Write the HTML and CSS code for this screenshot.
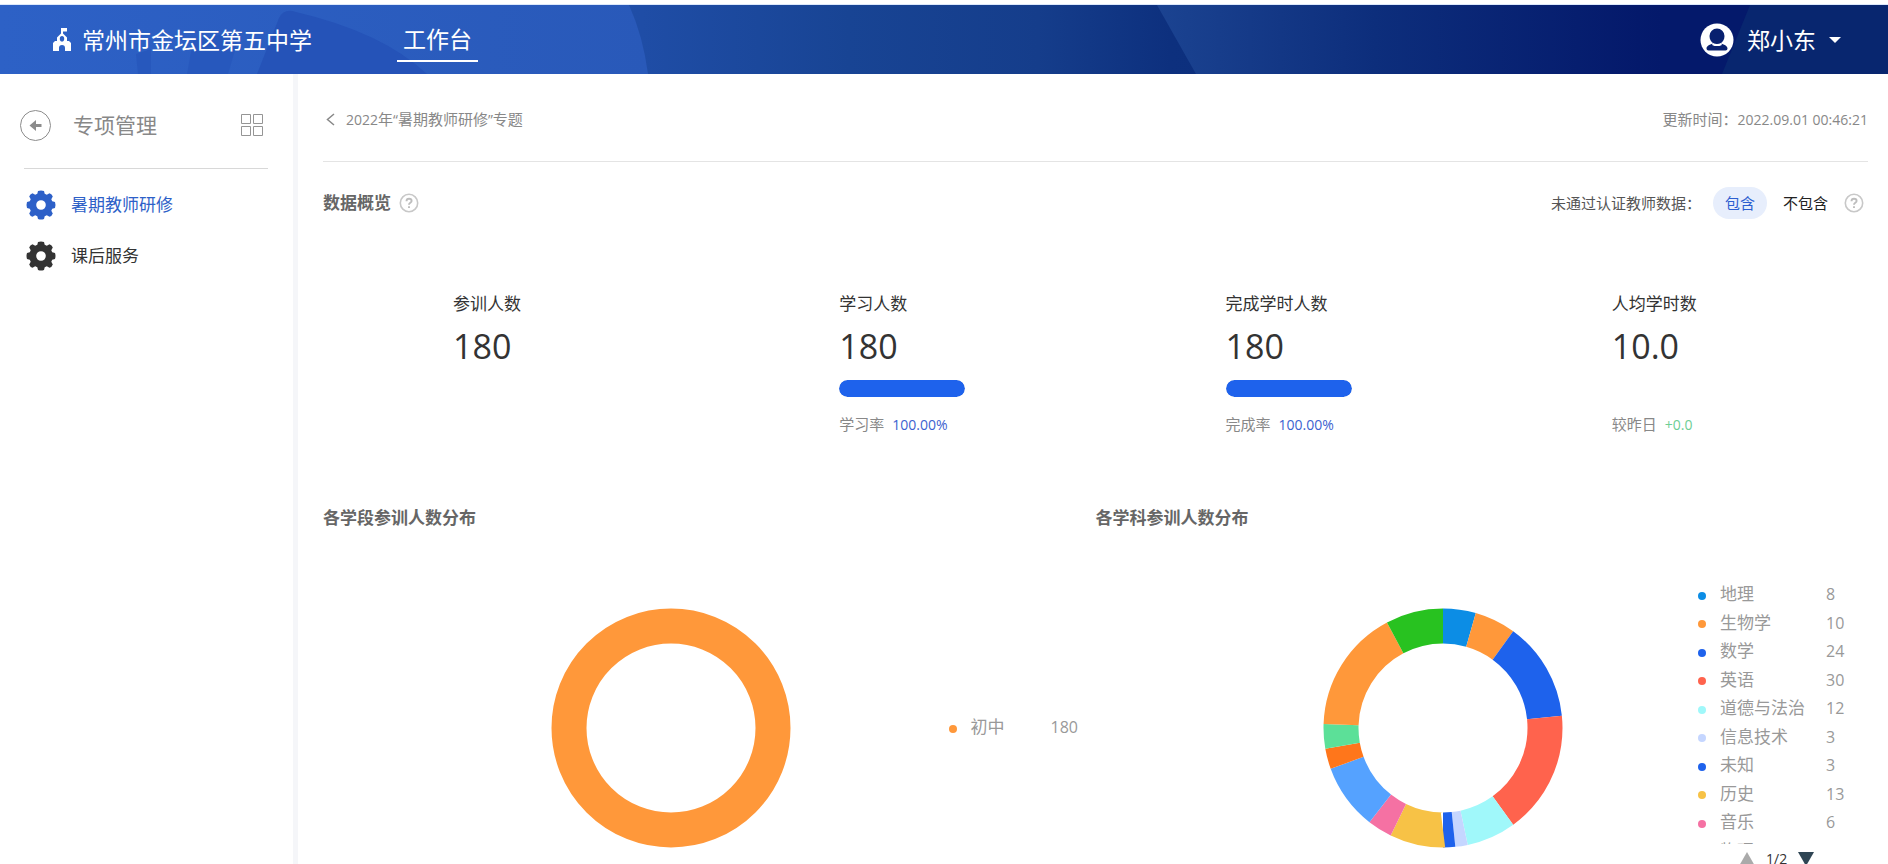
FILE: index.html
```html
<!DOCTYPE html>
<html lang="zh-CN">
<head>
<meta charset="utf-8">
<title>工作台</title>
<link rel="stylesheet" href="styles.css">
</head>
<body>
<svg class="defs" aria-hidden="true">
  <symbol id="gear" viewBox="0 0 30 30">
    <path fill-rule="evenodd" d="M12 1Q15 0 18 1L18.700 3.800L20.800 4.700L23.500 3.200Q26 4 26.800 6.500L25.300 9.200L26.200 11.300L29 12Q30 15 29 18L26.200 18.700L25.300 20.800L26.800 23.500Q26 26 23.500 26.800L20.800 25.300L18.700 26.200L18 29Q15 30 12 29L11.300 26.200L9.200 25.300L6.500 26.800Q4 26 3.200 23.500L4.700 20.800L3.800 18.700L1 18Q0 15 1 12L3.800 11.300L4.700 9.200L3.200 6.500Q4 4 6.500 3.200L9.200 4.700L11.300 3.800ZM15 10.200A4.800 4.800 0 1 0 15 19.800A4.800 4.800 0 1 0 15 10.200Z"/>
  </symbol>
  <symbol id="help" viewBox="0 0 20 20">
    <circle cx="10" cy="10" r="8.700" fill="none" stroke="#c8c8c8" stroke-width="1.600"/>
    <path d="M7.500 8.200C7.500 4.900 12.600 5.100 12.600 8C12.600 9.900 10 9.800 10 11.800M10 13.200V14.900" fill="none" stroke="#bdbdbd" stroke-width="1.900"/>
  </symbol>
</svg>

<header class="topbar">
  <svg class="topbar-art" viewBox="0 0 1888 69" preserveAspectRatio="none" aria-hidden="true">
    <defs>
      <linearGradient id="sky" x1="0" x2="1"><stop offset="0" stop-color="#2a5cc0"/><stop offset=".34" stop-color="#1f4da6"/><stop offset=".45" stop-color="#184494"/><stop offset=".55" stop-color="#153d8b"/><stop offset=".62" stop-color="#0d307e"/><stop offset=".75" stop-color="#0a2a78"/><stop offset=".88" stop-color="#04196b"/><stop offset="1" stop-color="#04196b"/></linearGradient>
      <linearGradient id="disc" x1="0" x2="1"><stop offset="0" stop-color="#2d61c6"/><stop offset="1" stop-color="#2959b9"/></linearGradient>
      <linearGradient id="slope" x1="0" x2="1"><stop offset="0" stop-color="#1b4391"/><stop offset=".45" stop-color="#0d2e7c"/><stop offset="1" stop-color="#04196b"/></linearGradient>
    </defs>
    <rect width="1888" height="69" fill="url(#sky)"/>
    <path d="M0 0H629Q643 31 648 69H0Z" fill="url(#disc)"/>
    <path d="M257 69L279 13Q284 3 296 7Q382 27 427 69Z" fill="#2553b8"/>
    <path d="M138 69L136 49L151 44V69ZM187 69L193 36L241 25L228 69Z" fill="#2758bd"/>
    <path d="M1157 0L1196 69H1640V0Z" fill="url(#slope)"/>
    <path d="M1750 0H1888V69H1722Z" fill="#08266f"/>
  </svg>
  <div class="school">
    <svg width="18" height="24" viewBox="0 0 18 24" aria-hidden="true"><path fill="#fff" fill-rule="evenodd" d="M8 0H14V3.500H10V5.500L14 9.500V13H16L18 15V23H12V20A3 3 0 0 0 6 20V23H0V15L2 13H4V9.500L8 5.500ZM9 8A2.200 2.800 0 1 0 9 13.600A2.200 2.800 0 1 0 9 8Z"/></svg>
    <span>常州市金坛区第五中学</span>
  </div>
  <nav class="topnav"><a href="#">工作台</a></nav>
  <button class="user" type="button">
    <svg width="34" height="34" viewBox="0 0 34 34" aria-hidden="true"><circle cx="17" cy="17" r="16.500" fill="#fff"/><path fill="#08206f" d="M17 5.500A7.500 7.500 0 0 1 24.500 13C24.500 16.500 22.800 19 20.300 20.400C24 21.300 27.500 22.500 27.500 25.500Q27.500 27.500 25.500 27.500H8.500Q6.500 27.500 6.500 25.500C6.500 22.500 10 21.300 13.700 20.400C11.200 19 9.500 16.500 9.500 13A7.500 7.500 0 0 1 17 5.500Z"/><path d="M12.500 21Q17 23.200 21.500 21" fill="none" stroke="#fff" stroke-width="2"/></svg>
    <span>郑小东</span>
    <svg width="12" height="6" viewBox="0 0 12 6" aria-hidden="true"><path fill="#fff" d="M0 0H12L6 6Z"/></svg>
  </button>
</header>

<div class="shell">
  <aside class="sidebar">
    <div class="side-head">
      <button class="icon-btn" type="button" aria-label="返回"><svg width="31" height="31" viewBox="0 0 31 31"><circle cx="15.500" cy="15.500" r="15" fill="none" stroke="#8c8c8c"/><path d="M9.500 15.500L16 10V14H21.500V17H16V21Z" fill="#8c8c8c"/></svg></button>
      <h2>专项管理</h2>
      <button class="icon-btn" type="button" aria-label="应用列表"><svg width="22" height="22" viewBox="0 0 22 22"><path d="M.5.5H9.500V9.500H.5ZM12.500.5H21.500V9.500H12.500ZM.5 12.500H9.500V21.500H.5ZM12.500 12.500H21.500V21.500H12.500Z" fill="none" stroke="#959595"/></svg></button>
    </div>
    <nav class="side-nav">
      <a class="active" href="#"><svg width="30" height="30"><use href="#gear"/></svg>暑期教师研修</a>
      <a href="#"><svg width="30" height="30"><use href="#gear"/></svg>课后服务</a>
    </nav>
  </aside>

  <main class="main">
    <div class="crumbs">
      <a href="#"><svg width="9" height="13" viewBox="0 0 9 13" aria-hidden="true"><path d="M8 1L1.500 6.500L8 12" fill="none" stroke="#888" stroke-width="1.500"/></svg><span><span class="latin">2022</span>年<span class="latin">“</span>暑期教师研修<span class="latin">”</span>专题</span></a>
      <p>更新时间：<span class="latin">2022.09.01 00:46:21</span></p>
    </div>

    <div class="overview-head">
      <h1>数据概览</h1>
      <svg width="20" height="20" role="img" aria-label="说明"><use href="#help"/></svg>
      <div class="filter">
        <span>未通过认证教师数据：</span>
        <button class="pill selected" type="button">包含</button>
        <button class="pill" type="button">不包含</button>
        <svg width="20" height="20" role="img" aria-label="说明"><use href="#help"/></svg>
      </div>
    </div>

    <section class="stats">
      <div class="stat"><h3>参训人数</h3><strong>180</strong></div>
      <div class="stat"><h3>学习人数</h3><strong>180</strong><div class="bar"><div style="width:100%"></div></div><p>学习率<b>100.00%</b></p></div>
      <div class="stat"><h3>完成学时人数</h3><strong>180</strong><div class="bar"><div style="width:100%"></div></div><p>完成率<b>100.00%</b></p></div>
      <div class="stat"><h3>人均学时数</h3><strong>10.0</strong><div class="bar empty"></div><p>较昨日<b class="up">+0.0</b></p></div>
    </section>

    <div class="charts">
      <section class="chart">
        <h2>各学段参训人数分布</h2>
        <div class="chart-body stage">
          <svg class="donut" width="240" height="240" viewBox="0 0 240 240"><circle cx="120" cy="120" r="102" stroke="#ff983a"/></svg>
          <div class="legend-box"><ul class="legend"><li><i class="c2"></i><span>初中</span><b>180</b></li></ul></div>
        </div>
      </section>
      <section class="chart">
        <h2>各学科参训人数分布</h2>
        <div class="chart-body subject">
          <svg class="donut" width="240" height="240" viewBox="0 0 240 240">
            <g transform="rotate(-90 120 120)">
              <circle cx="120" cy="120" r="102" pathLength="180" stroke="#0c8de5" stroke-dasharray="8 172"/>
              <circle cx="120" cy="120" r="102" pathLength="180" stroke="#ff983a" stroke-dasharray="10 170" stroke-dashoffset="-8"/>
              <circle cx="120" cy="120" r="102" pathLength="180" stroke="#1e62ec" stroke-dasharray="24 156" stroke-dashoffset="-18"/>
              <circle cx="120" cy="120" r="102" pathLength="180" stroke="#ff634d" stroke-dasharray="30 150" stroke-dashoffset="-42"/>
              <circle cx="120" cy="120" r="102" pathLength="180" stroke="#a0f8fa" stroke-dasharray="12 168" stroke-dashoffset="-72"/>
              <circle cx="120" cy="120" r="102" pathLength="180" stroke="#c5d6ff" stroke-dasharray="3 177" stroke-dashoffset="-84"/>
              <circle cx="120" cy="120" r="102" pathLength="180" stroke="#1e62ec" stroke-dasharray="3 177" stroke-dashoffset="-87"/>
              <circle cx="120" cy="120" r="102" pathLength="180" stroke="#f7c246" stroke-dasharray="13 167" stroke-dashoffset="-90"/>
              <circle cx="120" cy="120" r="102" pathLength="180" stroke="#f571a3" stroke-dasharray="6 174" stroke-dashoffset="-103"/>
              <circle cx="120" cy="120" r="102" pathLength="180" stroke="#55a2ff" stroke-dasharray="16 164" stroke-dashoffset="-109"/>
              <circle cx="120" cy="120" r="102" pathLength="180" stroke="#ff761b" stroke-dasharray="5 175" stroke-dashoffset="-125"/>
              <circle cx="120" cy="120" r="102" pathLength="180" stroke="#5ce098" stroke-dasharray="6 174" stroke-dashoffset="-130"/>
              <circle cx="120" cy="120" r="102" pathLength="180" stroke="#ff983a" stroke-dasharray="30 150" stroke-dashoffset="-136"/>
              <circle cx="120" cy="120" r="102" pathLength="180" stroke="#28c220" stroke-dasharray="14 166" stroke-dashoffset="-166"/>
            </g>
          </svg>
          <div class="legend-box">
            <div class="legend-view">
              <ul class="legend">
                <li><i class="c1"></i><span>地理</span><b>8</b></li>
                <li><i class="c2"></i><span>生物学</span><b>10</b></li>
                <li><i class="c3"></i><span>数学</span><b>24</b></li>
                <li><i class="c4"></i><span>英语</span><b>30</b></li>
                <li><i class="c5"></i><span>道德与法治</span><b>12</b></li>
                <li><i class="c6"></i><span>信息技术</span><b>3</b></li>
                <li><i class="c3"></i><span>未知</span><b>3</b></li>
                <li><i class="c7"></i><span>历史</span><b>13</b></li>
                <li><i class="c8"></i><span>音乐</span><b>6</b></li>
                <li><span class="next">物理</span></li>
              </ul>
            </div>
            <div class="pager">
              <button class="icon-btn" type="button" aria-label="上一页"><svg width="16" height="14" viewBox="0 0 16 14"><path d="M8 0L16 14H0Z" fill="#aaa"/></svg></button>
              <span>1/2</span>
              <button class="icon-btn" type="button" aria-label="下一页"><svg width="16" height="14" viewBox="0 0 16 14"><path d="M0 0H16L8 14Z" fill="#2f4554"/></svg></button>
            </div>
          </div>
        </div>
      </section>
    </div>
  </main>
</div>
</body>
</html>
```
FILE: styles.css
```css
* { box-sizing: border-box; margin: 0; padding: 0; }

body {
  height: 100vh;
  display: flex;
  flex-direction: column;
  overflow: hidden;
  padding-top: 4px;
  background: #fff;
  color: #333;
  font: 15px/24px "Open Sans", "Noto Sans CJK SC", sans-serif;
}

a { color: inherit; text-decoration: none; }
button { border: 0; background: none; color: inherit; font: inherit; cursor: pointer; }
svg { display: block; flex: none; }
ul { list-style: none; }
h1, h2, h3, b, strong { font-weight: 400; }
.defs { width: 0; height: 0; position: absolute; }
.latin { font-size: 14px; }
.icon-btn { display: block; flex: none; }

/* Top bar */
.topbar {
  position: relative;
  isolation: isolate;
  flex: none;
  display: flex;
  align-items: center;
  height: 70px;
  padding: 0 47px 0 53px;
  border-top: 1px solid #dce8fb;
  color: #fff;
  font-size: 23px;
  line-height: 34px;
}
.topbar-art { position: absolute; inset: 0; z-index: -1; width: 100%; height: 100%; }
.school { display: flex; align-items: center; gap: 11px; }
.topnav { margin-left: 85px; padding-top: 4px; }
.topnav a { display: block; padding: 0 6px 4px; border-bottom: 2px solid #fff; }
.user { display: flex; align-items: center; gap: 13px; margin-left: auto; }

/* Sidebar */
.shell { flex: 1; display: flex; min-height: 0; }
.sidebar { flex: none; width: 298px; border-right: 5px solid #f5f6f9; }
.side-head {
  display: flex;
  align-items: center;
  height: 95px;
  margin: 0 25px 0 24px;
  padding: 8px 5px 0 0;
  border-bottom: 1px solid #d8d8d8;
}
.side-head .icon-btn:first-child { margin-left: -4px; }
.side-head h2 { flex: 1; margin-left: 22px; color: #888; font-size: 21px; }
.side-nav { padding: 10px 0 0 26px; }
.side-nav a { display: flex; align-items: center; gap: 15px; height: 51px; font-size: 17px; fill: #333; }
.side-nav .active { color: #2d60c8; fill: #2d60c8; }

/* Page head */
.main { flex: 1; min-width: 0; padding: 0 20px 0 25px; }
.crumbs {
  display: flex;
  align-items: center;
  justify-content: space-between;
  height: 88px;
  padding-top: 4px;
  border-bottom: 1px solid #e4e4e4;
  color: #888;
}
.crumbs a { display: flex; align-items: center; gap: 11px; padding-left: 3px; }
.overview-head { display: flex; align-items: center; gap: 8px; height: 82px; padding-right: 4px; }
h1, .chart h2 { color: #666; font-size: 17px; font-weight: 700; }
.filter { display: flex; align-items: center; margin-left: auto; color: #555; }
.pill { height: 32px; padding: 0 12px; border-radius: 16px; color: #222; }
.pill.selected { margin: 0 4px 0 12px; background: #e7eefc; color: #2d5fd0; }
.filter svg { margin-left: 4px; }

/* Figures */
.stats { display: grid; grid-template-columns: repeat(4, 1fr); padding-top: 48px; }
.stat { padding-left: 130px; }
.stat h3 { font-size: 17px; }
.stat strong { display: block; margin: 8px 0 12px; font-size: 34px; line-height: 44px; }
.bar { width: 126px; height: 17px; overflow: hidden; border-radius: 9px; background: #e8e8e8; }
.bar div { height: 100%; border-radius: 9px; background: #1e62ec; }
.bar.empty { background: none; }
.stat p { margin-top: 15px; color: #888; }
.stat b { margin-left: 8px; color: #3c62d0; font-size: 14px; }
.stat .up { color: #6dce94; }

/* Charts */
.charts { display: grid; grid-template-columns: 1fr 1fr; padding-top: 69px; }
.chart-body { display: flex; align-items: flex-start; padding-top: 50px; }
.donut { margin: 28px auto 0; fill: none; stroke-width: 35px; }
.stage { padding-left: 70px; }
.subject { padding-left: 92px; }
.legend-box { flex: none; color: #999; font-size: 17px; }
.stage .legend-box { width: 147px; padding-top: 135px; }
.subject .legend-box { width: 170px; }
.legend { display: grid; grid-auto-rows: 1fr; align-items: center; }
.subject .legend { height: 285px; }
.legend-view { height: 264px; overflow: hidden; }
.legend li { display: flex; align-items: center; }
.legend i { width: 8px; height: 8px; margin: 3px 14px 0 0; border-radius: 50%; }
.legend b { font-size: 16px; }
.legend span { width: 80px; }
.subject .legend span { width: 106px; }
.legend .next { margin-left: 22px; }
.pager { display: flex; align-items: center; gap: 11px; padding: 3px 0 0 41px; color: #333; font-size: 14px; }
.c1 { background: #0c8de5; }
.c2 { background: #ff983a; }
.c3 { background: #1e62ec; }
.c4 { background: #ff634d; }
.c5 { background: #a0f8fa; }
.c6 { background: #c5d6ff; }
.c7 { background: #f7c246; }
.c8 { background: #f571a3; }
```
